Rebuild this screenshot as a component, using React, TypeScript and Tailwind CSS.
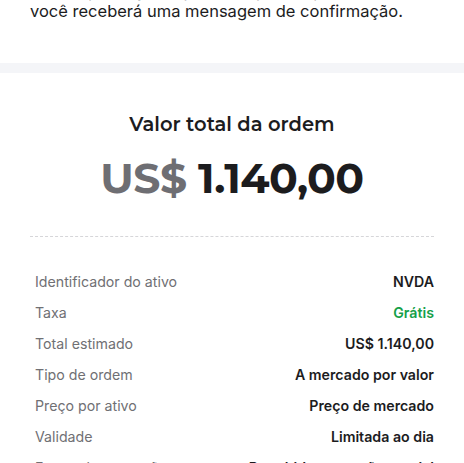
const rows: { label: string; value: string; green?: boolean }[] = [
  { label: 'Identificador do ativo', value: 'NVDA' },
  { label: 'Taxa', value: 'Grátis', green: true },
  { label: 'Total estimado', value: 'US$ 1.140,00' },
  { label: 'Tipo de ordem', value: 'A mercado por valor' },
  { label: 'Preço por ativo', value: 'Preço de mercado' },
  { label: 'Validade', value: 'Limitada ao dia' },
  { label: 'Forma de execução', value: 'Permitida execução parcial' },
];

const Notice = () => {
  return (
    <div className="bg-white px-[30px] pb-[42px]">
      <p className="-mt-[19px] text-[16.5px] leading-[20px] text-[#1c1c1e]">
        Assim que seguir o pedido, após a operação,
        <br />
        você receberá uma mensagem de confirmação.
      </p>
    </div>
  );
};

const Summary = () => {
  return (
    <div className="bg-white px-[30px] pt-[37px]">
      <h2 className="text-center text-[19.5px] font-semibold leading-[28px] text-[#1c1c1e] font-['Montserrat','Inter',sans-serif]">
        Valor total da ordem
      </h2>
      <div className="mt-[15px] text-center text-[42.5px] font-bold leading-[50px] tracking-[-0.5px] font-['Montserrat','Inter',sans-serif]">
        <span className="text-[#6e6e73]">US$</span>{' '}
        <span className="text-[#1c1c1e]">1.140,00</span>
      </div>
      <div className="mt-[33px] border-t border-dashed border-[#d6d6d9]" />
      <div className="mt-[29px] flex flex-col pl-[5px]">
        {rows.map((row) => {
          return (
            <div key={row.label} className="flex h-[31px] items-center justify-between text-[14.2px]">
              <span className="text-[#707074]">{row.label}</span>
              <span className={row.green ? 'font-semibold text-[#15a049]' : 'font-semibold text-[#1c1c1e]'}>
                {row.value}
              </span>
            </div>
          );
        })}
      </div>
    </div>
  );
}

export default function App() {
  return (
    <div className="h-[463px] w-[464px] overflow-hidden bg-white font-['Inter',sans-serif]">
      <Notice />
      <div className="h-[10px] bg-[#f4f5f8]" />
      <Summary />
    </div>
  );
}
